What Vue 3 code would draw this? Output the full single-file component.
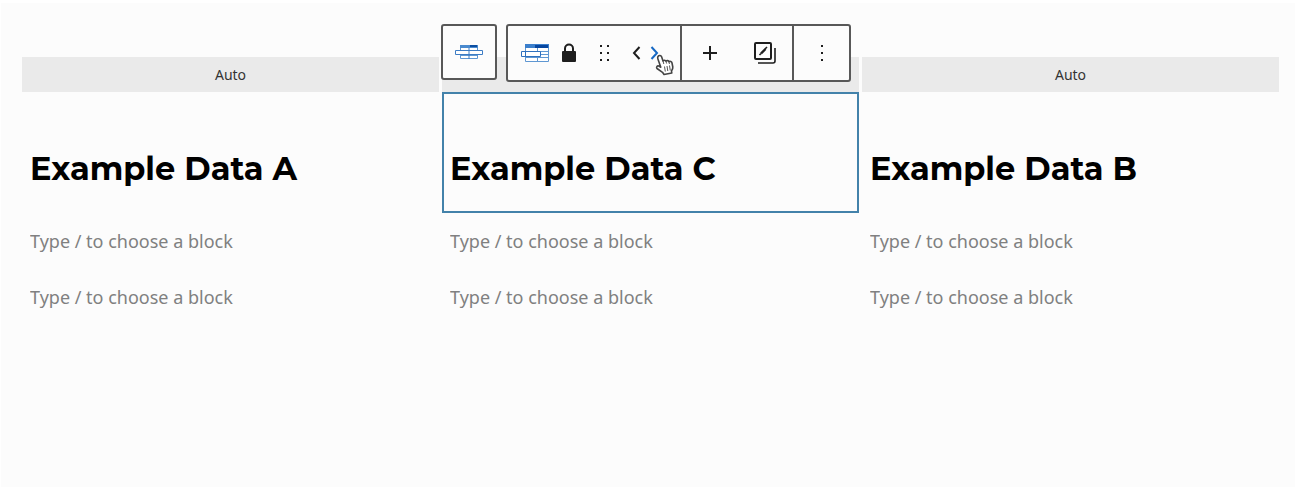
<script setup>
  import { ref } from 'vue';

  const columns = ref([
    { id: 'a', title: 'Example Data A', width: 'Auto', cells: ['', ''] },
    { id: 'c', title: 'Example Data C', width: '', cells: ['', ''] },
    { id: 'b', title: 'Example Data B', width: 'Auto', cells: ['', ''] }
  ]);
  const activeId = ref('c');

  function move(id, step) {
    const from = columns.value.findIndex((c) => c.id === id);
    const to = from + step;
    if (to < 0 || to >= columns.value.length) return;
    const [column] = columns.value.splice(from, 1);
    columns.value.splice(to, 0, column);
  }
</script>

<template>
  <main class="editor">
    <div class="columns">
      <section v-for="column in columns" :key="column.id" class="column">
        <div class="column-width">{{ column.width }}</div>

        <div class="column-head" :class="{ active: column.id === activeId }">
          <h2>{{ column.title }}</h2>
        </div>

        <input
          v-for="(cell, i) in column.cells"
          :key="i"
          v-model="column.cells[i]"
          class="cell"
          type="text"
          placeholder="Type / to choose a block"
          aria-label="Type / to choose a block"
        />

        <div v-if="column.id === activeId" class="toolbar">
          <button class="parent" type="button">
            <svg width="30" height="18" viewBox="0 0 30 18">
              <g fill="#fff" stroke="#5f97d2">
                <path d="M6.500 3.500h17v12h-17zM6.500 12.500h17" />
                <path d="M1.500 7.500h27v4h-27zM15 5v11" stroke="#3d7cc4" />
              </g>
              <path d="M6 2h18v3H6z" fill="#4a8ace" />
              <path d="M16 2h7v2h-7z" fill="#0b4ea2" />
            </svg>
          </button>

          <div class="bar">
            <div class="group first">
              <button class="block" type="button">
                <svg width="30" height="20" viewBox="0 0 30 20">
                  <g fill="#fff" stroke="#5f97d2">
                    <path d="M5.500 2.500h23v16h-23zM5.500 14.500h23M20 11.500h8.500M20 8.500h8.500M17.500 4v14" />
                    <path d="M1.500 8.500h19v5h-19zM5.500 8.500v5" stroke="#2e70be" />
                  </g>
                  <path d="M5 1h24v4H5z" fill="#3b7fcc" />
                  <path d="M15 2h13v3H15z" fill="#0646a0" />
                </svg>
              </button>
              <button class="lock" type="button">
                <svg width="16" height="20" viewBox="0 0 16 20">
                  <path d="M4 9V5.500a4 4 0 0 1 8 0V9" fill="none" stroke="#1e1e1e" stroke-width="2" />
                  <rect x="1" y="8" width="14" height="11" rx="1" fill="#1e1e1e" />
                </svg>
              </button>
              <button class="drag" type="button">
                <svg width="14" height="18" viewBox="0 0 14 18" fill="#1e1e1e">
                  <path d="M2 1h2v2H2zM9 1h2v2H9zM2 8h2v2H2zM9 8h2v2H9zM2 15h2v2H2zM9 15h2v2H9z" />
                </svg>
              </button>
              <button class="move" type="button" @click="move(column.id, -1)">
                <svg width="10" height="16" viewBox="0 0 10 16">
                  <path d="M8.500 2 3 8l5.500 6" fill="none" stroke="#1e1e1e" stroke-width="2" />
                </svg>
              </button>
              <button class="move" type="button" @click="move(column.id, 1)">
                <svg width="10" height="16" viewBox="0 0 10 16">
                  <path d="M2.500 2 8 8l-5.500 6" fill="none" stroke="#1769c4" stroke-width="2" />
                </svg>
              </button>
            </div>

            <div class="group">
              <button class="tool" type="button">
                <svg width="16" height="16" viewBox="0 0 16 16">
                  <path d="M8 1v14M1 8h14" stroke="#1e1e1e" stroke-width="2" />
                </svg>
              </button>
              <button class="tool" type="button">
                <svg width="24" height="24" viewBox="0 0 24 24" fill="none" stroke="#1e1e1e" stroke-width="2">
                  <rect x="2" y="2" width="16" height="16" rx="1" />
                  <path d="M5 22h15q2 0 2-2V7" stroke-width="1.600" />
                  <path d="M8 12.500 12.500 8" stroke-width="2.400" />
                  <path d="M6.500 14l1.500-1.500M12 8l2-2" stroke-width="1.600" />
                </svg>
              </button>
            </div>

            <div class="group">
              <button class="tool" type="button">
                <svg width="4" height="18" viewBox="0 0 4 18" fill="#1e1e1e">
                  <path d="M1 1h2v2H1zM1 8h2v2H1zM1 15h2v2H1z" />
                </svg>
              </button>
            </div>

            <svg class="pointer" width="20" height="22" viewBox="0 0 20 22">
              <path
                d="M3 2.500C4 1 6 1.200 6.600 2.800L8 7c.8-1 2.500-1 3 .2.800-1 2.600-.8 3 .5 1-.8 2.700-.2 3 1.300l.8 4c.2 1.500-.6 3-1.300 4l.3 2-7.800 1.500-1.500-2.200L2 14.500c-1-1.300 0-3 1.800-2.500l2 1.200L2.900 5Q2.400 3.500 3 2.500Z"
                fill="#fff"
                stroke="#444"
                stroke-width="1.600"
                stroke-linejoin="round"
              />
              <path d="M8 7l.8 3M11 7.500l.6 2M14 8l.4 2M9.500 12.500l.8 5M12 12l.8 5M14.500 11.500l.8 5" fill="none" stroke="#555" />
            </svg>
          </div>
        </div>
      </section>
    </div>
  </main>
</template>

<style>
  body {
    background: #fff;
  }
</style>

<style scoped>
  .editor {
    box-sizing: border-box;
    min-height: calc(100vh - 2px);
    margin: 0 2px 0 1px;
    padding: 54px 16px 0 21px;
    border-top: 3px solid #fff;
    background: #fcfcfc;
    font-family: "Noto Sans", sans-serif;
  }

  .columns {
    display: grid;
    grid-template-columns: repeat(3, 1fr);
    gap: 3px;
  }

  .column {
    position: relative;
    display: flex;
    flex-direction: column;
    min-width: 0;
  }

  .column-width {
    height: 35px;
    line-height: 35px;
    font-size: 14px;
    text-align: center;
    color: #333;
    background: #eaeaea;
  }

  .column-head {
    padding: 53px 6px 20px;
    border: 2px solid transparent;
  }

  .column-head.active {
    border-color: #4382aa;
  }

  h2 {
    margin: 0;
    font-family: Montserrat, Inter, sans-serif;
    font-size: 32px;
    font-weight: 700;
    line-height: 44px;
    color: #000;
    white-space: nowrap;
  }

  .cell {
    height: 56px;
    padding: 0 8px;
    border: none;
    outline: 0;
    font-family: inherit;
    font-size: 18px;
    color: #333;
    background: transparent;
  }

  .cell::placeholder {
    color: #808080;
    opacity: 1;
  }

  .toolbar {
    position: absolute;
    top: -33px;
    left: -1px;
    display: flex;
    align-items: flex-start;
    gap: 9px;
  }

  button {
    display: flex;
    align-items: center;
    justify-content: center;
    padding: 0;
    border: none;
    background: transparent;
    cursor: pointer;
  }

  .parent {
    width: 56px;
    height: 56px;
    border: 2px solid #585858;
    border-radius: 3px;
    background: #fcfcfc;
  }

  .bar {
    position: relative;
    display: flex;
    height: 54px;
    border: 2px solid #585858;
    border-radius: 3px;
    background: #fcfcfc;
  }

  .group {
    display: flex;
  }

  .group + .group {
    border-left: 2px solid #585858;
  }

  .group.first {
    padding: 0 17px 0 7px;
  }

  .block {
    width: 40px;
  }

  .lock {
    width: 28px;
  }

  .drag {
    width: 44px;
  }

  .move {
    width: 18px;
  }

  .tool {
    width: 55px;
  }

  .pointer {
    position: absolute;
    top: 28px;
    left: 147px;
    pointer-events: none;
  }
</style>
